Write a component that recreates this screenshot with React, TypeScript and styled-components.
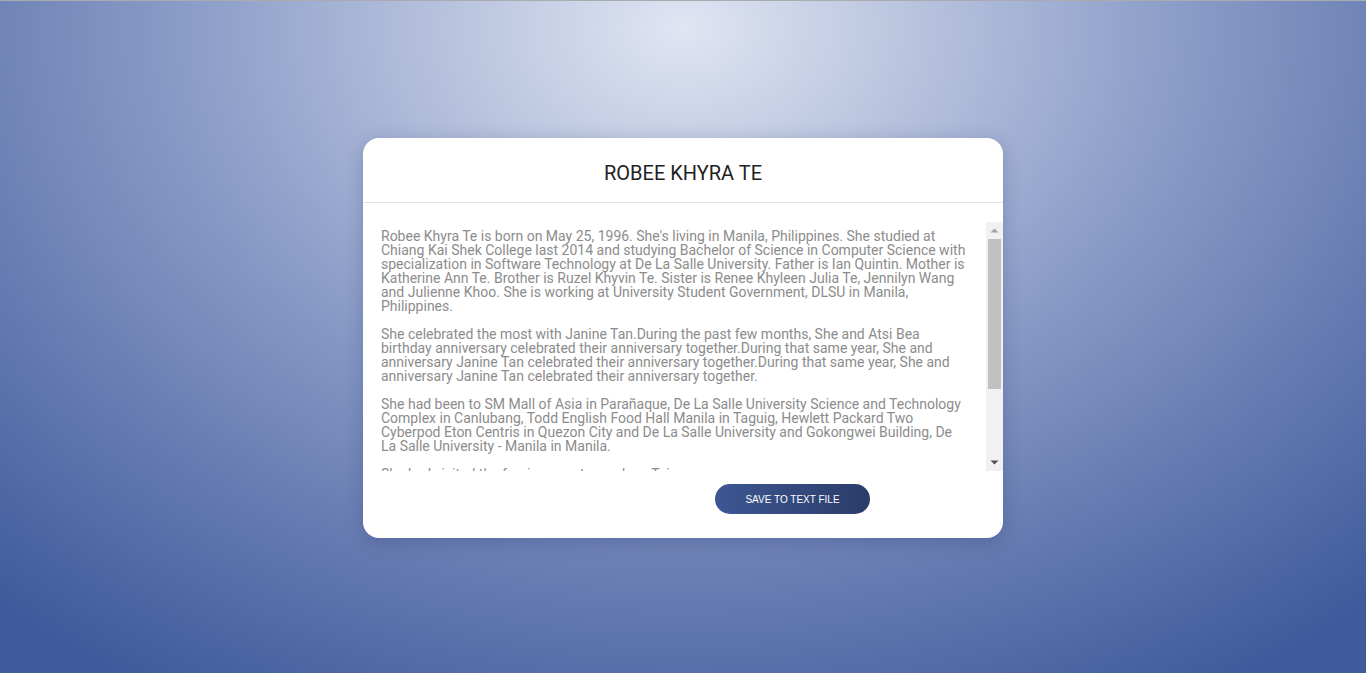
import styled, { createGlobalStyle } from 'styled-components';

const GlobalStyle = createGlobalStyle`
  html, body {
    margin: 0;
    padding: 0;
    height: 100%;
  }
  body {
    font-family: Roboto, "Liberation Sans", sans-serif;
  }
  #root {
    height: 100%;
  }
`;

const paragraphs = [
  "Robee Khyra Te is born on May 25, 1996. She's living in Manila, Philippines. She studied at Chiang Kai Shek College last 2014 and studying Bachelor of Science in Computer Science with specialization in Software Technology at De La Salle University. Father is Ian Quintin. Mother is Katherine Ann Te. Brother is Ruzel Khyvin Te. Sister is Renee Khyleen Julia Te, Jennilyn Wang and Julienne Khoo. She is working at University Student Government, DLSU in Manila, Philippines.",
  'She celebrated the most with Janine Tan.During the past few months, She and Atsi Bea birthday anniversary celebrated their anniversary together.During that same year, She and anniversary Janine Tan celebrated their anniversary together.During that same year, She and anniversary Janine Tan celebrated their anniversary together.',
  'She had been to SM Mall of Asia in Parañaque, De La Salle University Science and Technology Complex in Canlubang, Todd English Food Hall Manila in Taguig, Hewlett Packard Two Cyberpod Eton Centris in Quezon City and De La Salle University and Gokongwei Building, De La Salle University - Manila in Manila.',
  'She had visited the foreign country such as Taiwan.',
];

const App = () => {
  return (
    <Page>
      <GlobalStyle />
      <Card>
        <Header>
          <Title>ROBEE KHYRA TE</Title>
        </Header>
        <StoryBox>
          <Story>
            {paragraphs.map((text, i) => (
              <Paragraph key={i}>{text}</Paragraph>
            ))}
          </Story>
          <ScrollTrack>
            <ArrowButton>
              <svg width="17" height="17" viewBox="0 0 17 17">
                <path d="M4.5 10.5 L8.5 6.5 L12.5 10.5 Z" fill="#a3a3a3" />
              </svg>
            </ArrowButton>
            <ThumbLane>
              <Thumb />
            </ThumbLane>
            <ArrowButton>
              <svg width="17" height="17" viewBox="0 0 17 17">
                <path d="M4.5 6.5 L8.5 10.5 L12.5 6.5 Z" fill="#505050" />
              </svg>
            </ArrowButton>
          </ScrollTrack>
        </StoryBox>
        <Footer>
          <SaveButton>SAVE TO TEXT FILE</SaveButton>
        </Footer>
      </Card>
    </Page>
  );
};

export default App;

const Page = styled.div`
  height: 100vh;
  box-sizing: border-box;
  border-top: 1px solid #a9abb0;
  background: radial-gradient(
    ellipse 75% 115% at 50% 4%,
    #e0e5f3 0%,
    #b9c4de 22%,
    #8b9dc8 48%,
    #6479b0 75%,
    #3f5b9b 100%
  );
  display: flex;
  justify-content: center;
  align-items: flex-start;
  padding-top: 137px;
`;

const Card = styled.div`
  width: 640px;
  height: 400px;
  background: #fff;
  border-radius: 16px;
  box-shadow: 0 4px 18px rgba(30, 45, 90, 0.25);
  overflow: hidden;
  display: flex;
  flex-direction: column;
`;

const Header = styled.div`
  height: 64px;
  flex-shrink: 0;
  border-bottom: 1px solid #e4e4e4;
  display: flex;
  align-items: center;
  justify-content: center;
  margin-bottom: 19px;
`;

const Title = styled.h1`
  margin: 0;
  font-family: Roboto, "Liberation Sans", sans-serif;
  font-size: 20px;
  font-weight: 400;
  color: #222;
  padding-top: 6px;
`;

const StoryBox = styled.div`
  height: 249px;
  flex-shrink: 0;
  display: flex;
`;

const Story = styled.div`
  flex: 1;
  overflow: hidden;
  padding: 7px 18px 0 18px;
`;

const Paragraph = styled.p`
  margin: 0 0 14px 0;
  font-family: Roboto, "Liberation Sans", sans-serif;
  font-size: 14px;
  line-height: 14px;
  color: #8c8c8c;
`;

const ScrollTrack = styled.div`
  width: 17px;
  background: #f1f1f1;
  display: flex;
  flex-direction: column;
`;

const ArrowButton = styled.div`
  height: 17px;
  display: flex;
  align-items: center;
  justify-content: center;
`;

const ThumbLane = styled.div`
  flex: 1;
  padding: 0 2px;
`;

const Thumb = styled.div`
  height: 150px;
  background: #c1c1c1;
`;

const Footer = styled.div`
  display: flex;
  padding: 13px 0 0 352px;
`;

const SaveButton = styled.button`
  width: 155px;
  height: 30px;
  border: none;
  border-radius: 15px;
  background: linear-gradient(to right, #3d5793, #2b3c69);
  color: #fff;
  font-family: "Liberation Sans", Arial, sans-serif;
  font-size: 10px;
  cursor: pointer;
  padding: 0;
`;
